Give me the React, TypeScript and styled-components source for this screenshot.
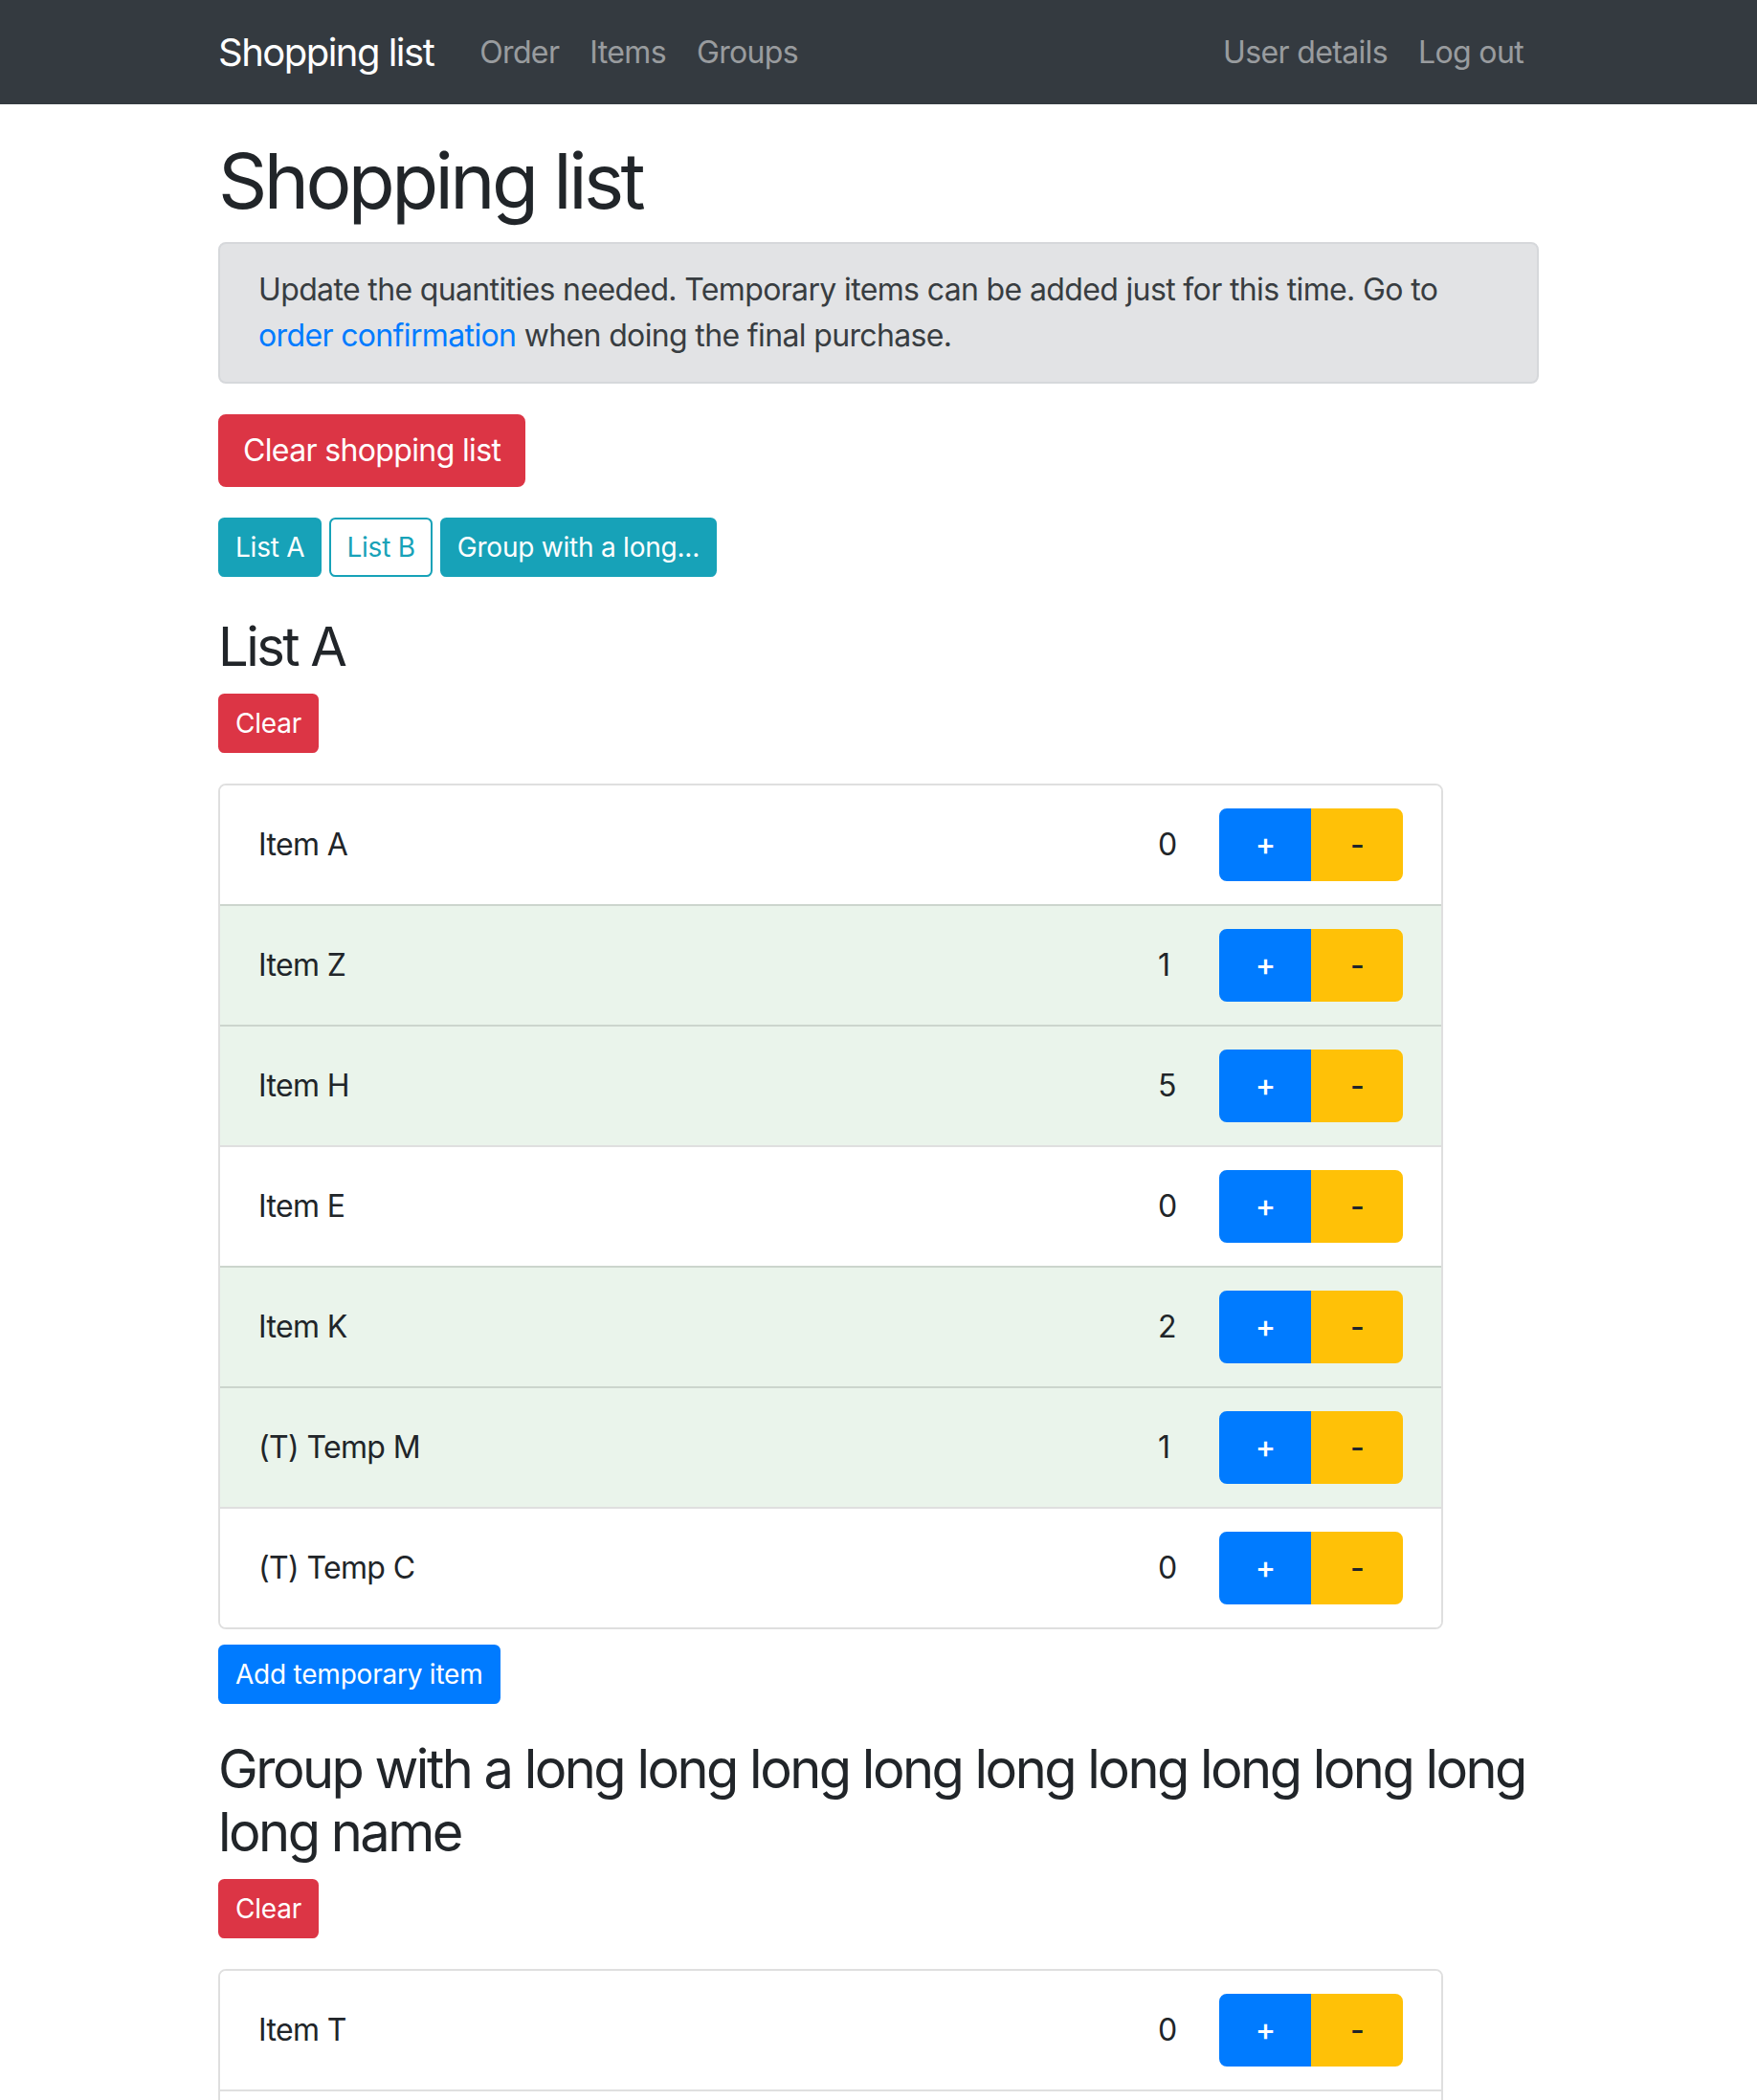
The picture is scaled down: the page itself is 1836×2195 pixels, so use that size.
import React from "react";
import styled, { createGlobalStyle, css } from "styled-components";

const GlobalStyle = createGlobalStyle`
  * { box-sizing: border-box; }
  html, body { margin: 0; padding: 0; background: #ffffff; }
  body {
    font-family: Inter, "Noto Sans", "Liberation Sans", sans-serif;
    font-size: 32px;
    line-height: 1.5;
    letter-spacing: -0.02em;
    color: #212529;
  }
`;

const Container = styled.div`
  max-width: 1440px;
  margin: 0 auto;
  padding: 0 30px;
`;

const NavBar = styled.nav`
  background: #343a40;
  height: 109px;
  display: flex;
  align-items: center;
`;

const NavInner = styled(Container)`
  display: flex;
  align-items: center;
  width: 100%;
`;

const Brand = styled.a`
  color: #ffffff;
  font-size: 40px;
  line-height: 60px;
  letter-spacing: -0.038em;
  margin-right: 32px;
  text-decoration: none;
`;

const NavList = styled.div<{ $right?: boolean }>`
  display: flex;
  align-items: center;
  margin-left: ${(p) => (p.$right ? "auto" : "0")};
`;

const NavLink = styled.a`
  color: rgba(255, 255, 255, 0.5);
  font-size: 32px;
  line-height: 48px;
  padding: 0 16px;
  text-decoration: none;
`;

const Main = styled(Container)`
  padding-top: 32px;
  padding-bottom: 64px;
`;

const Title = styled.h1`
  font-size: 80px;
  font-weight: 400;
  line-height: 1.2;
  letter-spacing: -0.045em;
  margin: 0 0 16px;
`;

const Alert = styled.div`
  background: #e2e3e5;
  border: 2px solid #d6d8db;
  color: #383d41;
  border-radius: 8px;
  padding: 24px 40px;
  margin-bottom: 32px;
`;

const Link = styled.a`
  color: #007bff;
  text-decoration: none;
`;

type Variant = "danger" | "info" | "outlineInfo" | "primary" | "warning";

const variants: Record<Variant, ReturnType<typeof css>> = {
  danger: css`background: #dc3545; border-color: #dc3545; color: #fff;`,
  info: css`background: #17a2b8; border-color: #17a2b8; color: #fff;`,
  outlineInfo: css`background: #fff; border-color: #17a2b8; color: #17a2b8;`,
  primary: css`background: #007bff; border-color: #007bff; color: #fff;`,
  warning: css`background: #ffc107; border-color: #ffc107; color: #212529;`,
};

const Button = styled.button<{ $variant: Variant; $small?: boolean }>`
  font-family: inherit;
  font-weight: 400;
  display: inline-block;
  border: 2px solid transparent;
  cursor: pointer;
  ${(p) =>
    p.$small
      ? css`
          font-size: 28px;
          line-height: 42px;
          letter-spacing: -0.008em;
          padding: 8px 16px;
          border-radius: 6.4px;
        `
      : css`
          font-size: 32px;
          line-height: 48px;
          letter-spacing: -0.02em;
          padding: 12px 24px;
          border-radius: 8px;
        `}
  ${(p) => variants[p.$variant]}
`;

const Block = styled.div<{ $mb?: number }>`
  margin-bottom: ${(p) => p.$mb ?? 0}px;
`;

const GroupTabs = styled.div`
  display: flex;
  gap: 8px;
  margin-bottom: 40px;
`;

const Section = styled.section`
  margin-bottom: 35px;
`;

const SectionTitle = styled.h3`
  font-size: 56px;
  font-weight: 400;
  line-height: 66px;
  letter-spacing: -0.045em;
  margin: 0 0 16px;
`;

const ItemList = styled.ul`
  list-style: none;
  margin: 0 0 16px;
  padding: 0;
  width: 1280px;
  border: 2px solid rgba(0, 0, 0, 0.125);
  border-radius: 8px;
  overflow: hidden;
`;

const Row = styled.li<{ $active: boolean }>`
  display: flex;
  align-items: center;
  padding: 24px 40px;
  background: ${(p) => (p.$active ? "#eaf4eb" : "#ffffff")};
  & + & {
    border-top: 2px solid rgba(0, 0, 0, 0.125);
  }
`;

const ItemName = styled.span`
  flex: 1;
`;

const Qty = styled.span`
  width: 64px;
`;

const Stepper = styled.div`
  display: flex;
`;

const StepButton = styled(Button)`
  width: 96px;
  padding-left: 0;
  padding-right: 0;
  text-align: center;
  font-weight: 500;
  &:first-child {
    border-top-right-radius: 0;
    border-bottom-right-radius: 0;
  }
  &:last-child {
    border-top-left-radius: 0;
    border-bottom-left-radius: 0;
  }
`;

type Item = { name: string; qty: number };

const listA: Item[] = [
  { name: "Item A", qty: 0 },
  { name: "Item Z", qty: 1 },
  { name: "Item H", qty: 5 },
  { name: "Item E", qty: 0 },
  { name: "Item K", qty: 2 },
  { name: "(T) Temp M", qty: 1 },
  { name: "(T) Temp C", qty: 0 },
];

const listLong: Item[] = [
  { name: "Item T", qty: 0 },
  { name: "Item B", qty: 0 },
  { name: "Item Q", qty: 0 },
];

const groups = [
  { title: "List A", items: listA },
  {
    title:
      "Group with a long long long long long long long long long long name",
    items: listLong,
  },
];

function GroupSection({ title, items }: { title: string; items: Item[] }) {
  return (
    <Section>
      <SectionTitle>{title}</SectionTitle>
      <Block $mb={32}>
        <Button $variant="danger" $small>
          Clear
        </Button>
      </Block>
      <ItemList>
        {items.map((it) => (
          <Row key={it.name} $active={it.qty > 0}>
            <ItemName>{it.name}</ItemName>
            <Qty>{it.qty}</Qty>
            <Stepper>
              <StepButton $variant="primary">+</StepButton>
              <StepButton $variant="warning">-</StepButton>
            </Stepper>
          </Row>
        ))}
      </ItemList>
      <Button $variant="primary" $small>
        Add temporary item
      </Button>
    </Section>
  );
}

export default function App() {
  return (
    <>
      <GlobalStyle />
      <NavBar>
        <NavInner>
          <Brand>Shopping list</Brand>
          <NavList>
            <NavLink>Order</NavLink>
            <NavLink>Items</NavLink>
            <NavLink>Groups</NavLink>
          </NavList>
          <NavList $right>
            <NavLink>User details</NavLink>
            <NavLink>Log out</NavLink>
          </NavList>
        </NavInner>
      </NavBar>
      <Main>
        <Title>Shopping list</Title>
        <Alert>
          Update the quantities needed. Temporary items can be added just for
          this time. Go to <Link>order confirmation</Link> when doing the final
          purchase.
        </Alert>
        <Block $mb={32}>
          <Button $variant="danger">Clear shopping list</Button>
        </Block>
        <GroupTabs>
          <Button $variant="info" $small>
            List A
          </Button>
          <Button $variant="outlineInfo" $small>
            List B
          </Button>
          <Button $variant="info" $small>
            Group with a long...
          </Button>
        </GroupTabs>
        {groups.map((g) => (
          <GroupSection key={g.title} title={g.title} items={g.items} />
        ))}
      </Main>
    </>
  );
}
